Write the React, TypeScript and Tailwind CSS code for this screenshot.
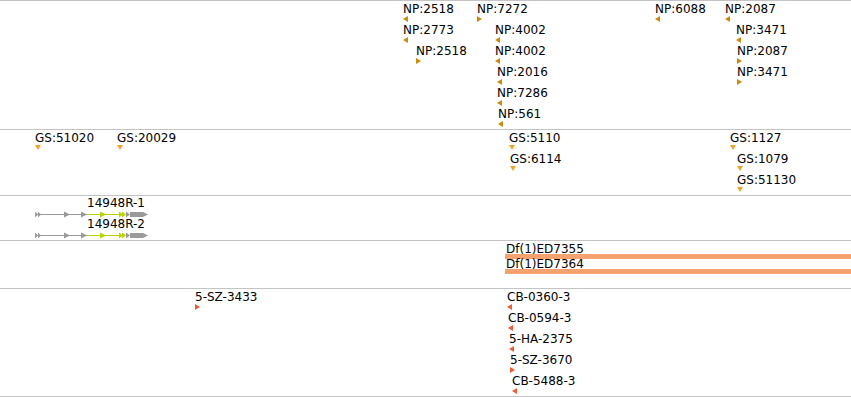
type Dir = 'L' | 'R' | 'D';

interface Feature {
  label: string;
  x: number;
  row: number;
  dir: Dir;
}

const npFeatures: Feature[] = [
  { label: 'NP:2518', x: 403, row: 0, dir: 'L' },
  { label: 'NP:7272', x: 477, row: 0, dir: 'R' },
  { label: 'NP:6088', x: 655, row: 0, dir: 'L' },
  { label: 'NP:2087', x: 725, row: 0, dir: 'L' },
  { label: 'NP:2773', x: 403, row: 1, dir: 'L' },
  { label: 'NP:4002', x: 495, row: 1, dir: 'L' },
  { label: 'NP:3471', x: 736, row: 1, dir: 'L' },
  { label: 'NP:2518', x: 416, row: 2, dir: 'R' },
  { label: 'NP:4002', x: 495, row: 2, dir: 'L' },
  { label: 'NP:2087', x: 737, row: 2, dir: 'R' },
  { label: 'NP:2016', x: 497, row: 3, dir: 'L' },
  { label: 'NP:3471', x: 737, row: 3, dir: 'R' },
  { label: 'NP:7286', x: 497, row: 4, dir: 'L' },
  { label: 'NP:561', x: 498, row: 5, dir: 'L' },
];

const gsFeatures: Feature[] = [
  { label: 'GS:51020', x: 35, row: 0, dir: 'D' },
  { label: 'GS:20029', x: 117, row: 0, dir: 'D' },
  { label: 'GS:5110', x: 509, row: 0, dir: 'D' },
  { label: 'GS:1127', x: 730, row: 0, dir: 'D' },
  { label: 'GS:6114', x: 510, row: 1, dir: 'D' },
  { label: 'GS:1079', x: 737, row: 1, dir: 'D' },
  { label: 'GS:51130', x: 737, row: 2, dir: 'D' },
];

const insertionFeatures: Feature[] = [
  { label: '5-SZ-3433', x: 195, row: 0, dir: 'R' },
  { label: 'CB-0360-3', x: 507, row: 0, dir: 'L' },
  { label: 'CB-0594-3', x: 508, row: 1, dir: 'L' },
  { label: '5-HA-2375', x: 509, row: 2, dir: 'L' },
  { label: '5-SZ-3670', x: 510, row: 3, dir: 'R' },
  { label: 'CB-5488-3', x: 512, row: 4, dir: 'L' },
];

const deficiencies = [
  { label: 'Df(1)ED7355', x: 505, top: 1, bar: 13 },
  { label: 'Df(1)ED7364', x: 505, top: 16, bar: 28 },
];

const Marker = ({ dir, color }: { dir: Dir; color: string }) => {
  if (dir === 'D') {
    return (
      <svg width="6" height="5" className="block">
        <polygon points="0,0 6,0 3,5" fill={color} />
      </svg>
    );
  }
  return (
    <svg width="5" height="6" className="block">
      <polygon points={dir === 'L' ? '5,0 5,6 0,3' : '0,0 0,6 5,3'} fill={color} />
    </svg>
  );
};

const FeatureTrack = ({ features, color, height }: { features: Feature[]; color: string; height: string }) => (
  <div className={`relative border-t border-[#c4c4c4] ${height}`}>
    {features.map((f, i) => (
      <div
        key={i}
        className="absolute flex flex-col"
        style={{ left: f.x, top: 1 + f.row * 21 }}
      >
        <span className="whitespace-nowrap leading-[14px]">{f.label}</span>
        <Marker dir={f.dir} color={color} />
      </div>
    ))}
  </div>
);

// one transcript: grey UTR segments, yellow-green coding segment
const Transcript = () => (
  <svg width="120" height="7" className="block">
    <line x1="2" y1="3.5" x2="53" y2="3.5" stroke="#9a9a9a" strokeWidth="1" />
    <polygon points="0,0.5 3,3.5 0,6.5" fill="#9a9a9a" />
    <polygon points="3,0.5 6,3.5 3,6.5" fill="#9a9a9a" />
    <polygon points="29,0.5 35,3.5 29,6.5" fill="#9a9a9a" />
    <polygon points="46,0.5 52,3.5 46,6.5" fill="#9a9a9a" />
    <line x1="52" y1="3.5" x2="90" y2="3.5" stroke="#b9d200" strokeWidth="1" />
    <polygon points="65,0.5 71,3.5 65,6.5" fill="#b9d200" />
    <polygon points="84,0.5 88,3.5 84,6.5" fill="#b9d200" />
    <polygon points="87,0.5 91,3.5 87,6.5" fill="#b9d200" />
    <polygon points="91,0.5 95,3.5 91,6.5" fill="#9a9a9a" />
    <polygon points="95,1 108,1 113,3.5 108,6 95,6" fill="#9a9a9a" />
  </svg>
);

const GeneTrack = () => (
  <div className="relative h-[45px] border-t border-[#c4c4c4]">
    {['14948R-1', '14948R-2'].map((name, i) => (
      <div key={name} className="absolute" style={{ left: 35, top: i * 21 }}>
        <span className="block whitespace-nowrap pl-[52px] leading-[14px]">{name}</span>
        <div className="mt-[1px]">
          <Transcript />
        </div>
      </div>
    ))}
  </div>
);

const DeficiencyTrack = () => (
  <div className="relative h-[48px] border-t border-[#c4c4c4]">
    {deficiencies.map((d) => (
      <div key={d.label}>
        <span className="absolute whitespace-nowrap leading-[14px]" style={{ left: d.x + 1, top: d.top }}>
          {d.label}
        </span>
        <div className="absolute right-0 h-[5px] bg-[#f5a26f]" style={{ left: d.x, top: d.bar }} />
      </div>
    ))}
  </div>
);

export default function App() {
  return (
    <div className="flex h-[397px] w-[851px] flex-col overflow-hidden bg-white font-['DejaVu_Sans',sans-serif] text-[12px] text-black">
      <FeatureTrack features={npFeatures} color="#cc8a08" height="h-[129px]" />
      <FeatureTrack features={gsFeatures} color="#f2a42a" height="h-[66px]" />
      <GeneTrack />
      <DeficiencyTrack />
      <div className="border-b border-[#c4c4c4]">
        <FeatureTrack features={insertionFeatures} color="#f25a34" height="h-[108px]" />
      </div>
    </div>
  );
}
